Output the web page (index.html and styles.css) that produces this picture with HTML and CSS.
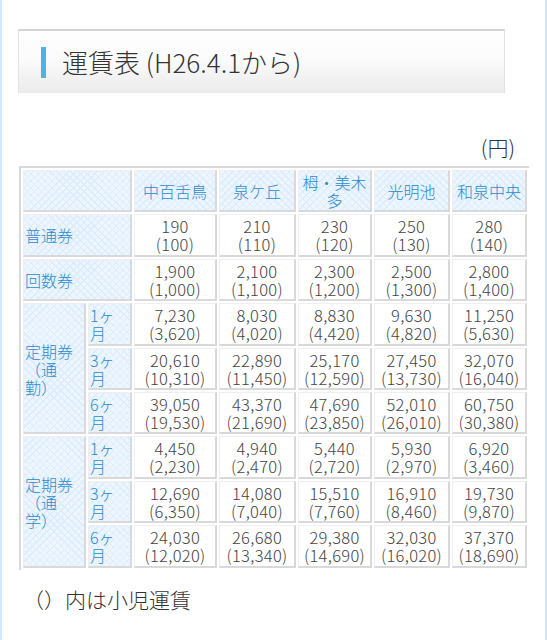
FILE: index.html
```html
<!DOCTYPE html>
<html lang="ja">
<head>
<meta charset="utf-8">
<link rel="stylesheet" href="styles.css">
</head>
<body>
<div class="page">
  <div class="heading"><span class="bar"></span><h2 class="title">運賃表 (H26.4.1から)</h2></div>
  <div class="unit">(円)</div>
  <table class="fare">
    <colgroup>
      <col class="w1"><col class="w2"><col class="w3"><col class="w4"><col class="w5"><col class="w6"><col class="w7">
    </colgroup>
    <tr>
      <th class="pat" colspan="2"></th>
      <th class="pat st">中百舌鳥</th>
      <th class="pat st">泉ケ丘</th>
      <th class="pat st">栂・美木多</th>
      <th class="pat st">光明池</th>
      <th class="pat st">和泉中央</th>
    </tr>
    <tr>
      <th class="pat lbl" colspan="2">普通券</th>
      <td>190<br>(100)</td><td>210<br>(110)</td><td>230<br>(120)</td><td>250<br>(130)</td><td>280<br>(140)</td>
    </tr>
    <tr>
      <th class="pat lbl" colspan="2">回数券</th>
      <td>1,900<br>(1,000)</td><td>2,100<br>(1,100)</td><td>2,300<br>(1,200)</td><td>2,500<br>(1,300)</td><td>2,800<br>(1,400)</td>
    </tr>
    <tr>
      <th class="pat lbl grp" rowspan="3">定期券（通勤）</th>
      <th class="pat lbl">1ヶ月</th>
      <td>7,230<br>(3,620)</td><td>8,030<br>(4,020)</td><td>8,830<br>(4,420)</td><td>9,630<br>(4,820)</td><td>11,250<br>(5,630)</td>
    </tr>
    <tr>
      <th class="pat lbl">3ヶ月</th>
      <td>20,610<br>(10,310)</td><td>22,890<br>(11,450)</td><td>25,170<br>(12,590)</td><td>27,450<br>(13,730)</td><td>32,070<br>(16,040)</td>
    </tr>
    <tr>
      <th class="pat lbl">6ヶ月</th>
      <td>39,050<br>(19,530)</td><td>43,370<br>(21,690)</td><td>47,690<br>(23,850)</td><td>52,010<br>(26,010)</td><td>60,750<br>(30,380)</td>
    </tr>
    <tr>
      <th class="pat lbl grp" rowspan="3">定期券（通学）</th>
      <th class="pat lbl">1ヶ月</th>
      <td>4,450<br>(2,230)</td><td>4,940<br>(2,470)</td><td>5,440<br>(2,720)</td><td>5,930<br>(2,970)</td><td>6,920<br>(3,460)</td>
    </tr>
    <tr>
      <th class="pat lbl">3ヶ月</th>
      <td>12,690<br>(6,350)</td><td>14,080<br>(7,040)</td><td>15,510<br>(7,760)</td><td>16,910<br>(8,460)</td><td>19,730<br>(9,870)</td>
    </tr>
    <tr>
      <th class="pat lbl">6ヶ月</th>
      <td>24,030<br>(12,020)</td><td>26,680<br>(13,340)</td><td>29,380<br>(14,690)</td><td>32,030<br>(16,020)</td><td>37,370<br>(18,690)</td>
    </tr>
  </table>
  <p class="note">（）内は小児運賃</p>
</div>
</body>
</html>
```

FILE: styles.css
```css
html, body {
  margin: 0;
  padding: 0;
  background: #fff;
}
body {
  font-family: "Noto Sans CJK JP", "Noto Sans", sans-serif;
  font-weight: 300;
  color: #444;
  text-spacing-trim: space-all;
}
.page {
  box-sizing: border-box;
  width: 547px;
  min-height: 640px;
  border-left: 2px solid #d3e6fb;
  border-right: 2px solid #d3e6fb;
  padding: 29px 17px 0 17px;
}
.heading {
  box-sizing: border-box;
  width: 487px;
  height: 64px;
  margin-left: -1px;
  border-top: 2px solid #d4d4d4;
  border-left: 1px solid #e2e2e2;
  border-right: 1px solid #e2e2e2;
  background: linear-gradient(#ffffff 0%, #fbfbfb 45%, #ebebeb 100%);
  display: flex;
  align-items: center;
  padding-left: 22px;
}
.bar {
  width: 5px;
  height: 31px;
  background: #4cb2e8;
  margin-right: 16px;
  flex: none;
}
.title {
  margin: 0;
  font-size: 26px;
  font-weight: 300;
  color: #333;
  line-height: 30px;
}
.unit {
  margin-top: 40px;
  text-align: right;
  font-size: 21px;
  line-height: 28px;
  color: #333;
  padding-right: 13px;
}
.fare {
  border-collapse: separate;
  border-spacing: 2px;
  table-layout: fixed;
  width: 509px;
  border-top: 2px solid #d9d9d9;
  border-left: 2px solid #d9d9d9;
  margin-top: 5px;
}
.w1 { width: 63px; }
.w2 { width: 44px; }
.w3 { width: 83px; }
.w4 { width: 77px; }
.w5 { width: 74px; }
.w6 { width: 76px; }
.w7 { width: 75px; }
.fare th, .fare td {
  border-top: 1px solid #efefef;
  border-left: 1px solid #efefef;
  border-right: 2px solid #d9d9d9;
  border-bottom: 2px solid #d9d9d9;
  padding: 2px 1px 1.4px;
  font-size: 16px;
  line-height: 18px;
  font-weight: 300;
}
.fare td {
  text-align: center;
  color: #444;
  background: #fff;
  font-size: 16.5px;
  letter-spacing: 0.3px;
}
.pat {
  background-color: #edf6fe;
  background-image:
    repeating-linear-gradient(45deg, #dcecfb 0 1px, transparent 1px 5px),
    repeating-linear-gradient(-45deg, #dcecfb 0 1px, transparent 1px 5px);
  color: #2b8bcc;
}
.st {
  text-align: center;
  font-size: 15px;
}
.lbl {
  text-align: left;
  font-size: 15px;
  padding-left: 4px;
}
.grp {
  padding-right: 9px;
}
.note {
  margin: 15px 0 0 4px;
  font-size: 21px;
  color: #333;
  line-height: 28px;
}
```
